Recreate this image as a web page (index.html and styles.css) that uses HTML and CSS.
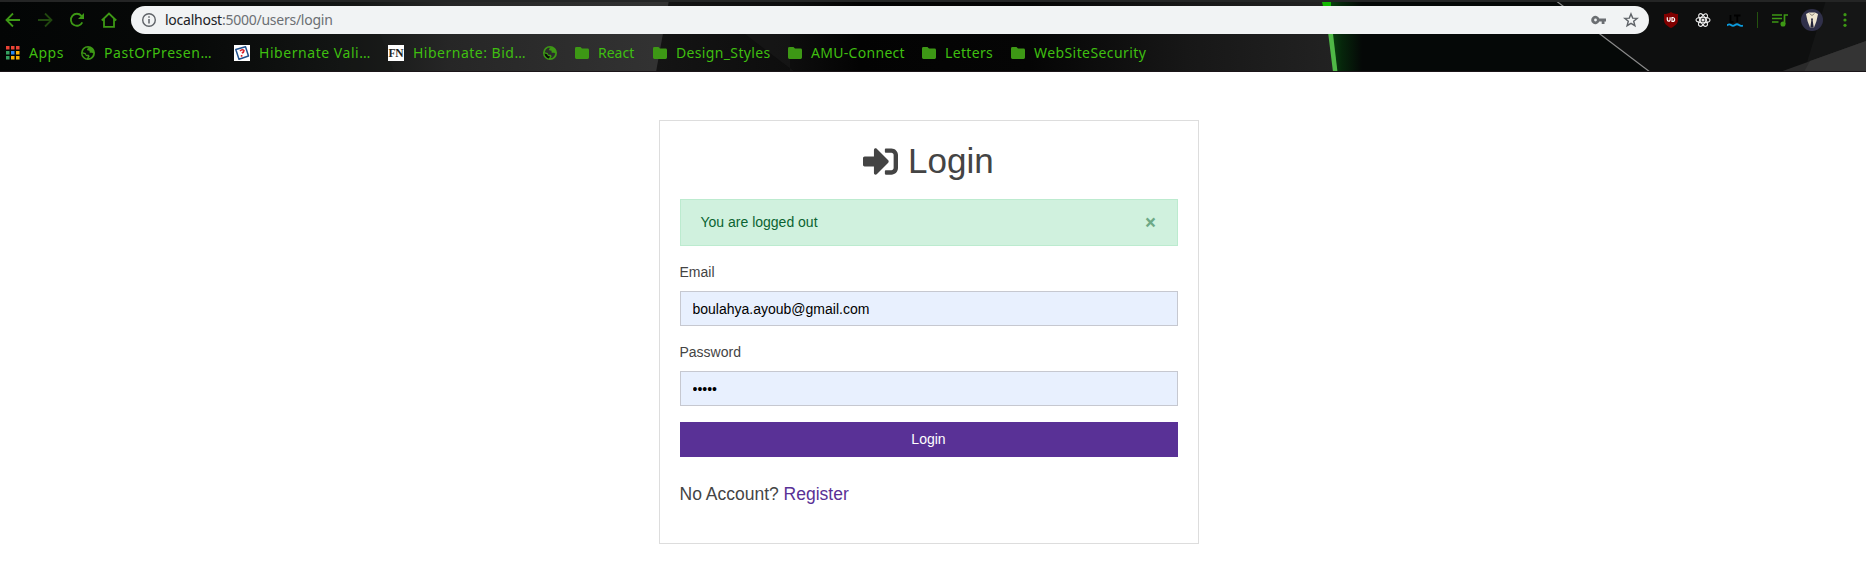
FILE: index.html
```
<!DOCTYPE html>
<html lang="en">
<head>
<meta charset="utf-8">
<title>Login</title>
<link rel="stylesheet" href="styles.css">
</head>
<body>
<svg class="defs" width="0" height="0">
  <symbol id="globe" viewBox="0 0 14 14"><path fill-rule="evenodd" d="M7 0a7 7 0 1 0 0 14A7 7 0 0 0 7 0zM7.600 1.700Q5.200 3 6.200 4.300L8.500 4.800L8.700 6.800H11L12.300 7.600Q11.800 10.300 9.500 11.700L7.500 12.300L8.700 10.300L7.800 8.800H5.300L4.700 7L1.700 6.200Q2.300 3 5 1.800z"/><path d="M1.500 7.500L4 8.200L5 10L7.200 10.500L5.700 12.500Q2 11 1.500 7.500z" fill="#080a08"/></symbol>
  <symbol id="folder" viewBox="0 0 14 12"><path d="M1.400 0H5.500L7 1.500h5.600A1.400 1.400 0 0 1 14 2.900v7.700a1.400 1.400 0 0 1-1.400 1.400H1.400A1.400 1.400 0 0 1 0 10.600V1.400A1.400 1.400 0 0 1 1.400 0z"/></symbol>
</svg>

<header class="browser">
  <svg class="theme" width="1866" height="72" viewBox="0 0 1866 72">
    <defs>
      <linearGradient id="base" gradientUnits="userSpaceOnUse" x1="0" y1="0" x2="1866" y2="0"><stop offset="0" stop-color="#030505"/><stop offset=".1" stop-color="#070908"/><stop offset=".19" stop-color="#141615"/><stop offset=".24" stop-color="#262626"/><stop offset=".35" stop-color="#323232"/></linearGradient>
      <linearGradient id="mid"><stop offset="0" stop-color="#141414"/><stop offset=".2" stop-color="#0d0d0d"/><stop offset=".3" stop-color="#030303"/><stop offset=".55" stop-color="#050505"/><stop offset=".78" stop-color="#171717"/><stop offset="1" stop-color="#222"/></linearGradient>
      <linearGradient id="glow"><stop offset="0" stop-color="#0a4a10"/><stop offset=".4" stop-color="#06260b"/><stop offset="1" stop-color="#050807"/></linearGradient>
    </defs>
    <rect width="1866" height="72" fill="url(#base)"/>
    <path d="M380 34L394 72H340V34z" fill="#151716" opacity=".5"/>
    <path d="M669 0H1336V72H656z" fill="url(#mid)"/>
    <path d="M745 34H790V72H795z" fill="#181818" opacity=".7"/>
    <path d="M1326 0H1866V72H1336z" fill="#050807"/>
    <path d="M1328 0H1362V72H1336z" fill="url(#glow)"/>
    <path d="M1555 0H1866V72H1650z" fill="#0e0f0f"/>
    <path d="M1826 0H1866V72H1804z" fill="#151616"/>
    <path d="M1780 72L1866 41V72z" fill="#2b2b2b"/>
    <path d="M1804 72L1810 61L1866 41V72z" fill="#343434"/>
    <path d="M1555 0L1650 72" stroke="#8b8b8b" stroke-width="1.200"/>
    <path d="M1324 0H1329L1337.500 72H1333z" fill="#4fb846"/>
    <path d="M1322 2h9v4h-8z" fill="#12b900"/>
    <rect width="1866" height="2" fill="#242525"/>
    <rect y="71" width="1866" height="1" fill="#1b1519"/>
  </svg>

  <div class="toolbar">
    <nav class="nav-icons">
      <svg width="16" height="16" viewBox="0 0 16 16"><path d="M15 8H2.500M8 1.500L1.500 8L8 14.500"/></svg>
      <svg class="dim" width="16" height="16" viewBox="0 0 16 16"><path d="M1 8H13.500M8 1.500L14.500 8L8 14.500"/></svg>
      <svg width="16" height="16" viewBox="0 0 16 16"><path d="M13.300 10.300A6 6 0 1 1 12.400 3.800L14 5.500"/><path class="solid" d="M15 1V7H9z"/></svg>
      <svg width="16" height="16" viewBox="0 0 16 16"><path d="M.8 8.500L8 1.500L15.200 8.500M3 7V14.800H13V7"/></svg>
    </nav>
    <div class="omnibox">
      <svg width="16" height="16" viewBox="0 0 16 16"><circle cx="8" cy="8" r="6.300" fill="none" stroke="#5f6368" stroke-width="1.400"/><path d="M8 7v4.500M8 4.300v1.500" stroke="#5f6368" stroke-width="1.500"/></svg>
      <div class="url"><span class="host">localhost</span><span>:5000/users/login</span></div>
      <svg class="key" width="16" height="16" viewBox="0 0 16 16"><path fill="#6b6e72" fill-rule="evenodd" d="M8.300 6.500A4.200 4.200 0 1 0 8.300 9.500H10.700V12H13.500V9.500H15V6.500zM4.500 6.600a1.400 1.400 0 1 1 0 2.800 1.400 1.400 0 0 1 0-2.800z"/></svg>
      <svg width="16" height="16" viewBox="0 0 16 16"><path fill="none" stroke="#5f6368" stroke-width="1.400" d="M8 1.900L9.700 6.100L14.200 6.400L10.700 9.300L11.900 13.700L8 11.300L4.100 13.700L5.300 9.300L1.800 6.400L6.300 6.100z"/></svg>
    </div>
    <div class="extensions">
      <svg width="16" height="16" viewBox="0 0 16 16"><path fill="#800000" d="M8 0C10 1.500 12.500 2 15 2V8C15 12 11 14.500 8 16C5 14.500 1 12 1 8V2C3.500 2 6 1.500 8 0z"/><path d="M4.300 5.200v2.600a1.400 1.400 0 0 0 2.800 0V5.200M9 5.500v4h.6a2 2 0 0 0 0-4z" fill="none" stroke="#fff" stroke-width="1.200"/></svg>
      <svg width="16" height="16" viewBox="0 0 16 16" fill="none" stroke="#eee" stroke-width="1.100"><ellipse cx="8" cy="8" rx="7" ry="2.800"/><ellipse cx="8" cy="8" rx="7" ry="2.800" transform="rotate(60 8 8)"/><ellipse cx="8" cy="8" rx="7" ry="2.800" transform="rotate(120 8 8)"/><circle cx="8" cy="8" r="1" fill="#eee"/></svg>
      <svg width="16" height="16" viewBox="0 0 16 16" fill="none"><path d="M3.500 3v7h3M7 3.500h6.500M10.300 3v7" stroke="#000" stroke-width="1.800"/><path d="M0 13.500Q2 11.500 4 13T8 13T12 13T16 13.500" stroke="#0b9de0" stroke-width="1.800"/></svg>
      <span class="divider"></span>
      <svg class="media" width="16" height="14" viewBox="0 0 16 14" fill="none" stroke="#3d9815" stroke-width="1.700"><path d="M0 2h10M0 5.500h10M0 9h6.500M12.500 11V2H16"/><circle cx="11" cy="11" r="1.700" fill="#3d9815"/></svg>
      <svg class="avatar" width="22" height="22" viewBox="0 0 22 22"><circle cx="11" cy="11" r="11" fill="#30304a"/><path d="M5 5L8 3.500H14L17 5L15.500 12L13 18.500H9L6.500 12z" fill="#eee5d0"/><path d="M8.500 4.500L11 6.500L13.500 4.500" fill="none" stroke="#8c8476"/><path d="M10 9.500h2l-.3 2l1 7h-3.400l1-7z" fill="#24243a"/></svg>
      <svg class="menu" width="4" height="14" viewBox="0 0 4 14" fill="#3d9815"><circle cx="2" cy="1.700" r="1.600"/><circle cx="2" cy="7" r="1.600"/><circle cx="2" cy="12.300" r="1.600"/></svg>
    </div>
  </div>

  <nav class="bookmarks">
    <a class="bm apps"><svg width="14" height="14" viewBox="0 0 14 14"><path fill="#ea4335" d="M0 0h3.500v3.500H0zM5 0h3.500v3.500H5zM10 0h3.500v3.500H10z"/><path fill="#34a060" d="M0 5h3.500v3.500H0zM0 10h3.500v3.500H0z"/><path fill="#2a86f0" d="M5 5h3.500v3.500H5z"/><path fill="#fbb008" d="M10 5h3.500v3.500H10zM5 10h3.500v3.500H5zM10 10h3.500v3.500H10z"/></svg><span>Apps</span></a>
    <a class="bm past"><svg width="14" height="14"><use href="#globe"/></svg><span>PastOrPresen…</span></a>
    <a class="bm vali"><svg width="16" height="16" viewBox="0 0 16 16"><path fill="#fff" d="M0 0h16v16H0z"/><path d="M1.800 4.500L11.500 1.800L14.500 11L5 14.200z" fill="none" stroke="#20508c" stroke-width="1.500" stroke-linejoin="round"/><path d="M6 6Q8.500 3.700 10 5.500Q10 7.300 7.800 8M7.600 10v1.700" fill="none" stroke="#d8232a" stroke-width="1.600"/></svg><span>Hibernate Vali…</span></a>
    <a class="bm bid"><span class="fn">FN</span><span>Hibernate: Bid…</span></a>
    <a class="bm lone"><svg width="14" height="14"><use href="#globe"/></svg></a>
    <a class="bm react"><svg width="14" height="12"><use href="#folder"/></svg><span>React</span></a>
    <a class="bm design"><svg width="14" height="12"><use href="#folder"/></svg><span>Design_Styles</span></a>
    <a class="bm amu"><svg width="14" height="12"><use href="#folder"/></svg><span>AMU-Connect</span></a>
    <a class="bm letters"><svg width="14" height="12"><use href="#folder"/></svg><span>Letters</span></a>
    <a class="bm web"><svg width="14" height="12"><use href="#folder"/></svg><span>WebSiteSecurity</span></a>
  </nav>
</header>

<main class="page">
  <section class="card">
    <h1><svg width="35" height="35" viewBox="0 0 512 512"><path fill="currentColor" d="M416 448h-84c-6.600 0-12-5.400-12-12v-40c0-6.600 5.400-12 12-12h84c17.700 0 32-14.300 32-32V160c0-17.700-14.300-32-32-32h-84c-6.600 0-12-5.400-12-12V76c0-6.600 5.400-12 12-12h84c53 0 96 43 96 96v192c0 53-43 96-96 96zm-47-209L201 71c-15-15-41-4.500-41 17v96H24c-13.300 0-24 10.700-24 24v96c0 13.300 10.700 24 24 24h136v96c0 21.500 26 32 41 17l168-168c9.300-9.400 9.300-24.600 0-34z"/></svg> Login</h1>
    <div class="alert"><span>You are logged out</span><button class="close" type="button">×</button></div>
    <form>
      <div class="group"><label for="email">Email</label><input id="email" type="text" value="boulahya.ayoub@gmail.com"></div>
      <div class="group"><label for="password">Password</label><input id="password" type="password" value="12345"></div>
      <button class="submit" type="button">Login</button>
    </form>
    <p class="lead">No Account? <a>Register</a></p>
  </section>
</main>
</body>
</html>
```
FILE: styles.css
```
* { box-sizing: border-box; }
body { margin: 0; background: #fff; color: #444; font: 14px/1.5 "Liberation Sans", Arial, sans-serif; }
svg { display: block; flex: none; }
.defs { position: absolute; }

.browser { position: relative; height: 72px; overflow: hidden; font-family: "Noto Sans", "Open Sans", sans-serif; }
.theme { position: absolute; inset: 0; }
.toolbar { position: relative; display: flex; align-items: center; height: 28px; margin-top: 6px; padding-left: 5px; }
.nav-icons { display: flex; gap: 16px; width: 126px; fill: none; stroke: #3d9815; stroke-width: 1.8; }
.nav-icons .dim { stroke: #21480f; }
.nav-icons .solid { fill: #3d9815; stroke: none; }
.omnibox { display: flex; align-items: center; width: 1518px; height: 28px; padding: 0 10px; border-radius: 14px; background: #f1f3f4; }
.url { flex: 1; margin-left: 8px; color: #6b6f73; font-size: 14px; letter-spacing: -0.25px; line-height: 28px; }
.host { color: #202124; }
.key { margin-right: 16px; }
.extensions { display: flex; align-items: center; margin-left: 14px; gap: 16px; }
.divider { width: 1px; height: 16px; margin-left: -2px; background: #24520f; }
.media { margin-left: -2px; }
.avatar { margin-left: -3px; }
.menu { margin-left: 4px; }

.bookmarks { position: relative; display: flex; align-items: center; height: 38px; padding-left: 6px; }
.bm { display: flex; align-items: center; gap: 9px; color: #3fbf10; font-size: 14px; line-height: 20px; white-space: nowrap; }
.bm span { margin-top: -1px; }
.bm svg { fill: #3d9815; }
.apps { width: 75px; letter-spacing: 0.5px; }
.past { width: 153px; letter-spacing: 0.55px; }
.vali { width: 154px; letter-spacing: 0.55px; }
.bid { width: 155px; letter-spacing: 0.5px; }
.lone { width: 32px; }
.react { width: 78px; }
.design { width: 135px; letter-spacing: 0.35px; }
.amu { width: 134px; letter-spacing: 0.3px; }
.letters { width: 89px; letter-spacing: 0.35px; }
.web { letter-spacing: 0.42px; }
.bm .fn { width: 16px; height: 16px; margin-top: 0; background: #fff; color: #222; font: bold 11.5px/16px "Liberation Serif", serif; letter-spacing: -0.2px; text-align: center; }

.page { display: flex; justify-content: center; padding-top: 48px; }
.card { width: 540px; height: 424px; margin-right: 9px; padding: 20px; border: 1px solid #ddd; }
h1 { display: flex; align-items: center; justify-content: center; gap: 9.7px; height: 42px; margin: 0 0 16px; font-size: 35px; font-weight: 400; line-height: 42px; padding-bottom: 2px; }
.alert { display: flex; justify-content: space-between; height: 47px; margin-bottom: 16px; padding: 12px 20px; border: 1px solid #bcebcf; background: #d0f1de; color: #0a6331; }
.close { height: 21px; padding: 0; border: 0; background: none; color: #0a6331; font: bold 21px/21px "Open Sans", "Liberation Sans", sans-serif; opacity: .5; }
.group { margin-bottom: 16px; }
label { display: block; margin-bottom: 8px; }
input { display: block; width: 100%; height: 35px; padding: 6px 12px; border: 1px solid #c6c8d0; border-radius: 0; background: #e8f0fe; color: #000; font: 14px/21px "Liberation Sans", sans-serif; }
.submit { display: block; width: 100%; height: 35px; border: 0; background: #593196; color: #fff; font: 14px/21px "Liberation Sans", sans-serif; }
.lead { margin: 24px 0 16px; font-size: 17.5px; }
.lead a { color: #593196; }
```
